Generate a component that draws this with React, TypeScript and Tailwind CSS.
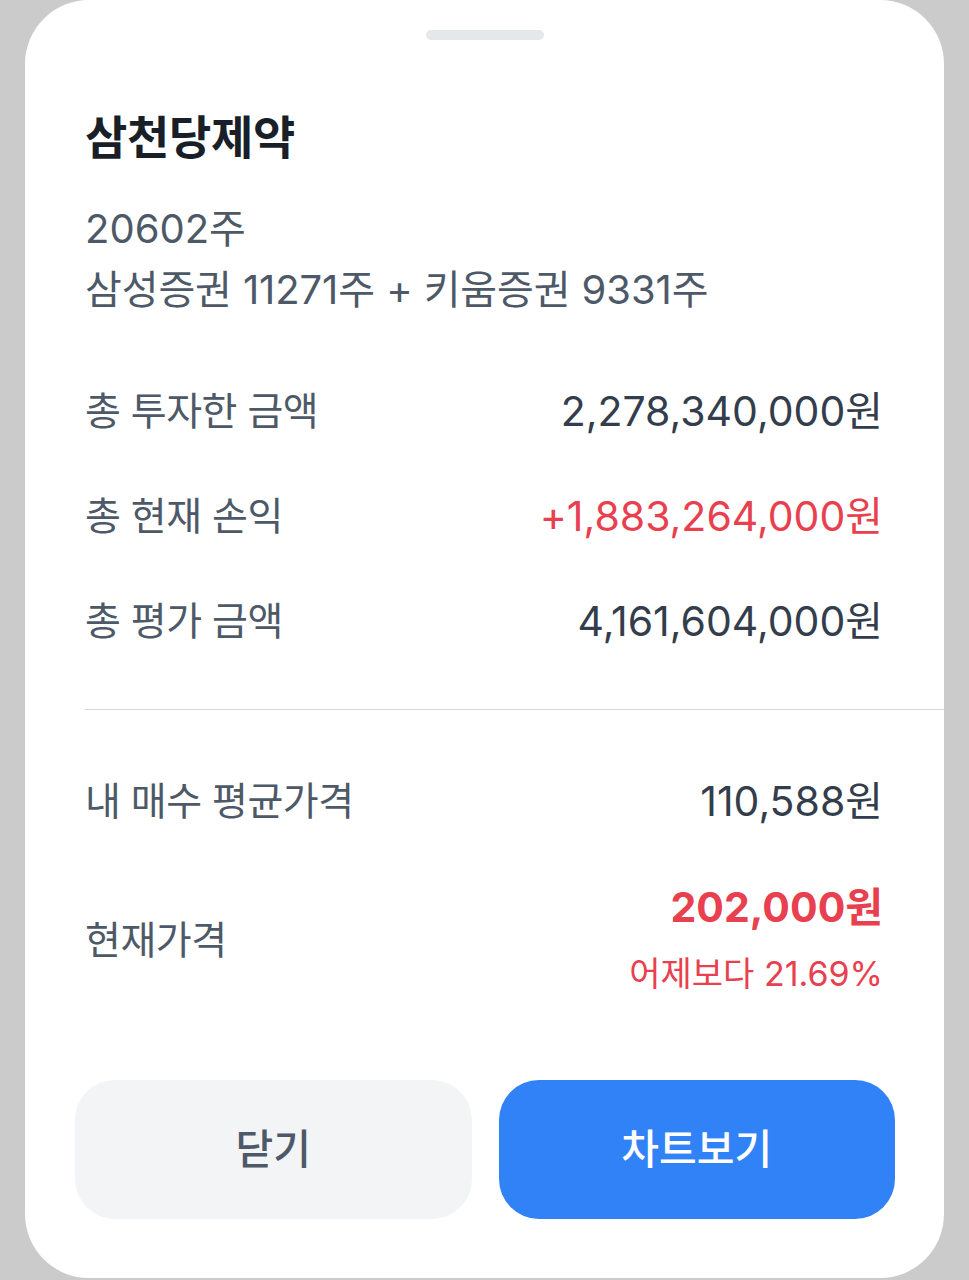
const font = { fontFamily: 'Inter, "Noto Sans CJK KR", sans-serif' };

type Row = { label: string; value: string; red?: boolean };

const totals: Row[] = [
  { label: '총 투자한 금액', value: '2,278,340,000원' },
  { label: '총 현재 손익', value: '+1,883,264,000원', red: true },
  { label: '총 평가 금액', value: '4,161,604,000원' },
];

function InfoRow({ label, value, red }: Row) {
  return (
    <div className="flex h-[105px] items-center justify-between">
      <span className="text-[39px] tracking-[-0.5px] text-[#4e5968]">{label}</span>
      <span className={`text-[41px] ${red ? 'text-[#e8404f]' : 'text-[#333d4b]'}`}>{value}</span>
    </div>
  );
}

export default function App() {
  return (
    <div className="flex min-h-[1280px] w-full bg-[#cbcbcb] antialiased" style={font}>
      <div className="ml-[25px] flex h-[1278px] w-[919px] flex-col rounded-[64px] bg-white">
        <div className="mx-auto mt-[30px] h-[10px] w-[118px] rounded-full bg-[#e5e8eb]" />

        <div className="pl-[60px] pr-[61px]">
          <h1 className="mt-[71px] text-[46px] font-bold leading-[52px] tracking-[-0.3px] text-[#191f28]">삼천당제약</h1>
          <p className="mt-[35px] text-[40px] leading-[61px] text-[#4e5968]">20602주</p>
          <p className="text-[40px] leading-[61px] tracking-[-0.1px] text-[#4e5968]">삼성증권 11271주 + 키움증권 9331주</p>

          <div className="mt-[39px]">
            {totals.map((r) => (
              <InfoRow key={r.label} {...r} />
            ))}
          </div>
        </div>

        <div className="ml-[60px] mt-[35px] h-px bg-[#d5d8dc]" />

        <div className="pl-[60px] pr-[61px]">
          <div className="mt-[39px]">
            <InfoRow label="내 매수 평균가격" value="110,588원" />
          </div>
          <div className="mt-[25px] flex items-center justify-between">
            <span className="text-[39px] tracking-[-0.5px] text-[#4e5968]">현재가격</span>
            <div className="flex flex-col items-end">
              <span className="text-[41px] font-bold leading-[56px] text-[#e8404f]">202,000원</span>
              <span className="mt-[11px] text-[34px] leading-[56px] text-[#e8404f]">어제보다 21.69%</span>
            </div>
          </div>
        </div>

        <div className="mt-[78px] flex gap-[27px] pl-[50px] pr-[49px]">
          <button className="flex h-[139px] flex-1 items-center justify-center rounded-[40px] bg-[#f2f4f6] text-[41px] font-medium text-[#4e5968]">
            닫기
          </button>
          <button className="flex h-[139px] flex-1 items-center justify-center rounded-[40px] bg-[#3182f6] text-[41px] font-medium text-white">
            차트보기
          </button>
        </div>
      </div>
    </div>
  );
}
